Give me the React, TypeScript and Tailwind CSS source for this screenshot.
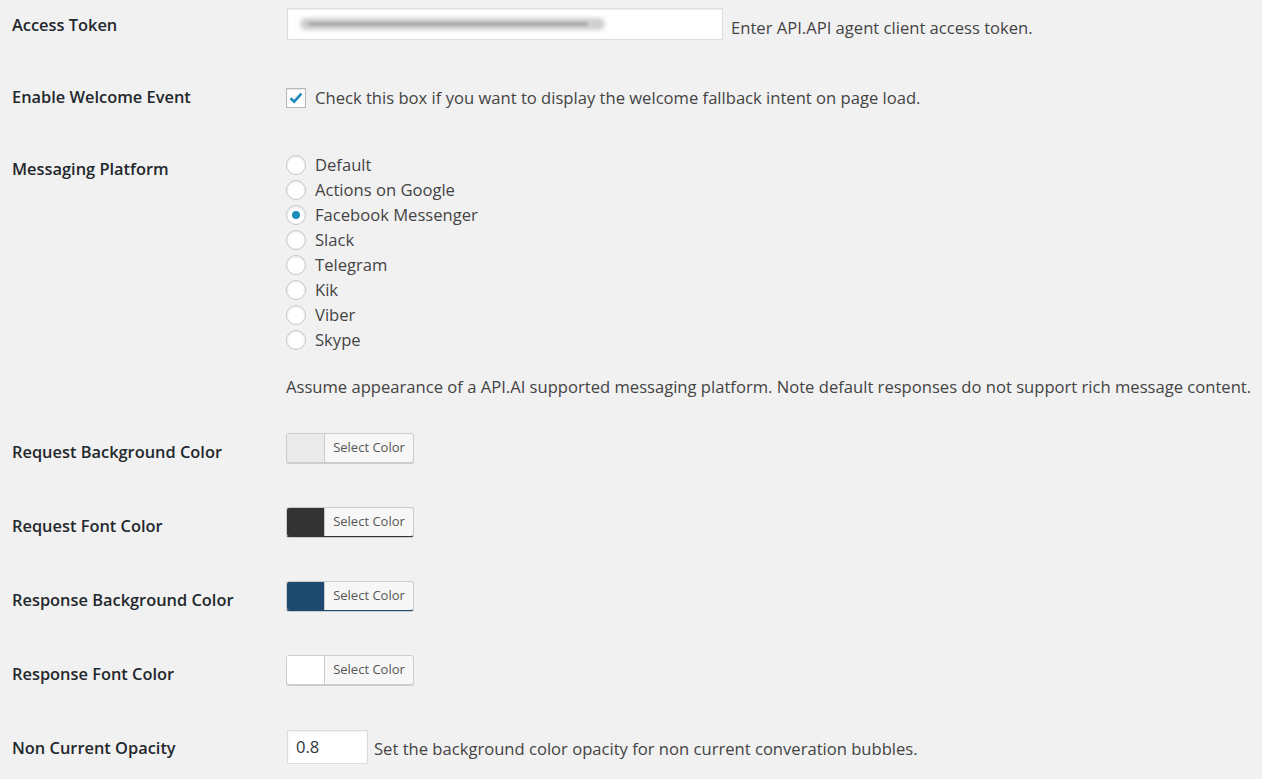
const platforms = [
  "Default",
  "Actions on Google",
  "Facebook Messenger",
  "Slack",
  "Telegram",
  "Kik",
  "Viber",
  "Skype",
];

function Label({ children, pad }: { children: React.ReactNode; pad: string }) {
  return (
    <div className={`w-[286px] shrink-0 pl-3 ${pad} text-[16.4px] leading-6 font-semibold text-[#23282d]`}>
      {children}
    </div>
  );
}

function ColorButton({ color, edge }: { color: string; edge: string }) {
  return (
    <div
      className={`flex h-[30px] w-[128px] overflow-hidden rounded-[3px] border border-[#ccc] ${edge} bg-[#f7f7f7] shadow-[0_1px_0_#ccc]`}
    >
      <div className={`w-[38px] border-r border-[#ccc] ${color}`} />
      <div className="flex flex-1 items-center justify-center text-[13px] text-[#555]">
        Select Color
      </div>
    </div>
  );
}

export default function App() {
  return (
    <div className="min-h-[779px] w-full bg-[#f1f1f1] font-['Open_Sans',sans-serif] text-[16.6px] text-[#444]">
      {/* Access Token */}
      <div className="flex h-[72px]">
        <Label pad="pt-[13px]">Access Token</Label>
        <div className="flex items-center gap-2 pt-2 self-start">
          <div className="relative ml-px h-8 w-[436px] border border-[#ddd] bg-white shadow-[inset_0_1px_2px_rgba(0,0,0,0.07)]">
            <div className="absolute left-[12px] top-[9px] h-[12px] w-[305px] rounded-full bg-[#cfcfcf] blur-[2px]" />
            <div className="absolute left-[20px] top-[13px] h-[4px] w-[280px] rounded-full bg-[#a9a9a9] blur-[1.5px]" />
          </div>
          <span className="pt-2 leading-6">Enter API.API agent client access token.</span>
        </div>
      </div>

      {/* Enable Welcome Event */}
      <div className="flex h-[72px]">
        <Label pad="pt-[13px]">Enable Welcome Event</Label>
        <div className="flex items-center gap-[9px] self-start pt-[14px]">
          <div className="flex h-5 w-5 items-center justify-center border border-[#b4b9be] bg-white shadow-[inset_0_1px_2px_rgba(0,0,0,0.1)]">
            <svg width="16" height="16" viewBox="0 0 16 16">
              <path d="M2.5 8.2 L6.2 11.6 L13.4 3.6" fill="none" stroke="#1e8cbe" strokeWidth="2.6" />
            </svg>
          </div>
          <span className="leading-6">
            Check this box if you want to display the welcome fallback intent on page load.
          </span>
        </div>
      </div>

      {/* Messaging Platform */}
      <div className="flex h-[276px]">
        <Label pad="pt-[13px]">Messaging Platform</Label>
        <div className="flex flex-col pt-2">
          {platforms.map((p) => (
            <div key={p} className="flex h-[25px] items-center gap-[9px]">
              <div className="flex h-5 w-5 items-center justify-center rounded-full border border-[#c4c7ca] bg-white shadow-[inset_0_1px_2px_rgba(0,0,0,0.1)]">
                {p === "Facebook Messenger" && <div className="h-2 w-2 rounded-full bg-[#1e8cbe]" />}
              </div>
              <span className="leading-6">{p}</span>
            </div>
          ))}
          <p className="mt-[23px] whitespace-nowrap leading-6">
            Assume appearance of a API.AI supported messaging platform. Note default responses do not support rich message content.
          </p>
        </div>
      </div>

      {/* Colors */}
      {[
        { label: "Request Background Color", color: "bg-[#eaeaea]", edge: "" },
        { label: "Request Font Color", color: "bg-[#333333]", edge: "border-b-[#333]" },
        { label: "Response Background Color", color: "bg-[#1f4a70]", edge: "border-b-[#1f4a70]" },
        { label: "Response Font Color", color: "bg-white", edge: "" },
      ].map((r) => (
        <div key={r.label} className="flex h-[74px]">
          <Label pad="pt-5">{r.label}</Label>
          <div className="pt-[13px]">
            <ColorButton color={r.color} edge={r.edge} />
          </div>
        </div>
      ))}

      {/* Non Current Opacity */}
      <div className="flex h-[63px]">
        <Label pad="pt-5">Non Current Opacity</Label>
        <div className="flex items-center gap-[6px] self-start pt-[14px]">
          <div className="ml-px flex h-[34px] w-[81px] items-center border border-[#ddd] bg-white px-2 text-[#32373c] shadow-[inset_0_1px_2px_rgba(0,0,0,0.07)]">
            0.8
          </div>
          <span className="pt-1 leading-6">
            Set the background color opacity for non current converation bubbles.
          </span>
        </div>
      </div>
    </div>
  );
}
